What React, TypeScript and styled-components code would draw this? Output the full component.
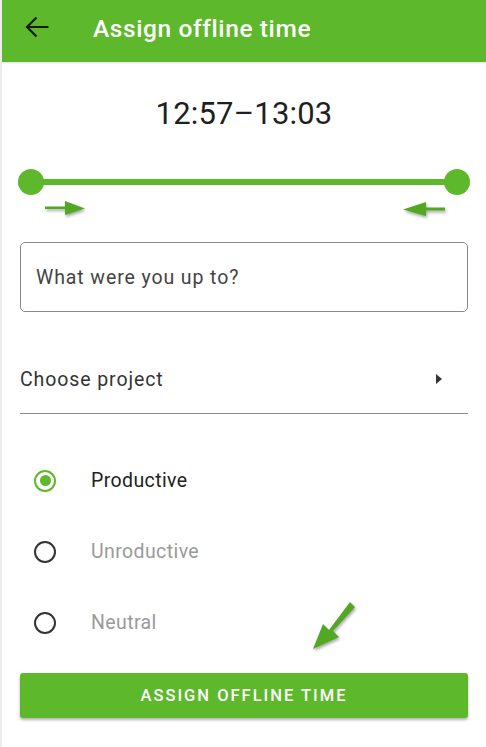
import React, { useState } from "react";
import styled, { createGlobalStyle } from "styled-components";

const GREEN = "#5eb82b";

const GlobalStyle = createGlobalStyle`
    html, body {
        margin: 0;
        padding: 0;
        background: #fff;
        font-family: Roboto, "Liberation Sans", sans-serif;
    }
`;

const Screen = styled.div`
    width: 486px;
    height: 747px;
    box-sizing: border-box;
    border-left: 2px solid #ececec;
    display: flex;
    flex-direction: column;
    overflow: hidden;
`;

const AppBar = styled.header`
    height: 62px;
    background: ${GREEN};
    display: flex;
    align-items: center;
    padding-left: 22px;
    gap: 43px;
    box-shadow: 0 1px 2px rgba(0, 0, 0, 0.12);
`;

const Title = styled.h1`
    margin: 0;
    color: #fff;
    font-size: 24.5px;
    font-weight: 500;
    letter-spacing: 0.6px;
    padding-bottom: 6px;
`;

const BackButton = styled.button`
    border: 0;
    background: none;
    padding: 0;
    display: flex;
    margin-bottom: 8px;
`;

const Body = styled.main`
    display: flex;
    flex-direction: column;
    padding: 0 18px 0 18px;
`;

const Time = styled.div`
    text-align: center;
    font-size: 31px;
    color: #1f1f1f;
    margin-top: 33px;
    letter-spacing: 0.2px;
`;

const SliderWrap = styled.div`
    position: relative;
    height: 26px;
    margin: 37px 0 0 0;
`;

const Track = styled.div`
    position: absolute;
    left: 10px;
    right: 10px;
    top: 10px;
    height: 6px;
    background: ${GREEN};
`;

const Thumb = styled.div<{ $side: "left" | "right" }>`
    position: absolute;
    top: 0;
    ${p => (p.$side === "left" ? "left: -2px;" : "right: -2px;")}
    width: 26px;
    height: 26px;
    border-radius: 50%;
    background: ${GREEN};
`;

const HintRow = styled.div`
    display: flex;
    justify-content: space-between;
    padding: 0 20px 0 24px;
    height: 22px;
    margin-top: 4px;
`;

const Arrow = styled.svg`
    filter: drop-shadow(1.5px 2px 1.5px rgba(0, 0, 0, 0.35));
`;

const TextBox = styled.input`
    margin-top: 21px;
    height: 70px;
    box-sizing: border-box;
    border: 1.5px solid #8a8a8a;
    border-radius: 5px;
    padding: 0 15px;
    font-family: inherit;
    font-size: 19.5px;
    color: #333;
    letter-spacing: 0.9px;
    outline: none;
    &::placeholder {
        color: #444;
    }
`;

const Select = styled.div`
    margin-top: 56px;
    height: 45px;
    border-bottom: 1.5px solid #8a8a8a;
    display: flex;
    align-items: flex-start;
    justify-content: space-between;
    padding: 0 26px 0 0;
    font-size: 19.5px;
    color: #333;
    letter-spacing: 0.9px;
`;

const Caret = styled.span`
    width: 0;
    height: 0;
    border-top: 5.5px solid transparent;
    border-bottom: 5.5px solid transparent;
    border-left: 6px solid #333;
    margin-top: 6px;
`;

const RadioGroup = styled.div`
    display: flex;
    flex-direction: column;
    margin-top: 31px;
    padding-left: 14px;
`;

const RadioRow = styled.label`
    height: 71px;
    display: flex;
    align-items: center;
    gap: 35px;
    cursor: pointer;
`;

const RadioCircle = styled.span<{ $on: boolean }>`
    width: 22px;
    height: 22px;
    box-sizing: border-box;
    border-radius: 50%;
    border: 2.5px solid ${p => (p.$on ? GREEN : "#333")};
    display: flex;
    align-items: center;
    justify-content: center;
    &::after {
        content: "";
        width: 11px;
        height: 11px;
        border-radius: 50%;
        background: ${p => (p.$on ? GREEN : "transparent")};
    }
`;

const RadioLabel = styled.span<{ $on: boolean }>`
    font-size: 19.5px;
    letter-spacing: 0.4px;
    color: ${p => (p.$on ? "#222" : "#9a9a9a")};
`;

const Pointer = styled.div`
    position: relative;
    height: 0;
`;

const PointerArrow = styled(Arrow)`
    position: absolute;
    left: 290px;
    top: -58px;
`;

const AssignButton = styled.button`
    margin-top: 15px;
    height: 45px;
    border: 0;
    border-radius: 3px;
    background: ${GREEN};
    color: #fff;
    font-family: inherit;
    font-size: 16.5px;
    font-weight: 500;
    letter-spacing: 2px;
    box-shadow: 0 2px 3px rgba(0, 0, 0, 0.3);
`;

const options = ["Productive", "Unroductive", "Neutral"];

export default function App() {
    const [choice, setChoice] = useState("Productive");

    return (
        <>
            <GlobalStyle/>
            <Screen>
                <AppBar>
                    <BackButton>
                        <svg width="26" height="22" viewBox="0 0 26 22">
                            <path d="M24.5 11H3 M12.5 1.5 L3 11 L12.5 20.5" fill="none" stroke="#1a1a1a"
                                  strokeWidth="2.2"/>
                        </svg>
                    </BackButton>
                    <Title>Assign offline time</Title>
                </AppBar>
                <Body>
                    <Time>12:57–13:03</Time>
                    <SliderWrap>
                        <Track/>
                        <Thumb $side="left"/>
                        <Thumb $side="right"/>
                    </SliderWrap>
                    <HintRow>
                        <Arrow width="44" height="20" viewBox="0 0 44 20">
                            <path d="M1 7.5h20V2l20 7.5-20 6.5v-6H1z" fill="#52a823"/>
                        </Arrow>
                        <Arrow width="48" height="22" viewBox="0 0 48 22">
                            <path d="M45 8.5H26V3L3 10.5 26 17v-5.5h19z" fill="#52a823"/>
                        </Arrow>
                    </HintRow>
                    <TextBox placeholder="What were you up to?"/>
                    <Select>
                        <span>Choose project</span>
                        <Caret/>
                    </Select>
                    <RadioGroup>
                        {options.map(o => (
                            <RadioRow key={o} onClick={() => setChoice(o)}>
                                <RadioCircle $on={choice === o}/>
                                <RadioLabel $on={choice === o}>{o}</RadioLabel>
                            </RadioRow>
                        ))}
                    </RadioGroup>
                    <Pointer>
                        <PointerArrow width="50" height="52" viewBox="0 0 50 52">
                            <path d="M40 2l5 5-22 24 6 6-26 12 10-25 6 6z" fill="#52a823"/>
                        </PointerArrow>
                    </Pointer>
                    <AssignButton>ASSIGN OFFLINE TIME</AssignButton>
                </Body>
            </Screen>
        </>
    );
}
